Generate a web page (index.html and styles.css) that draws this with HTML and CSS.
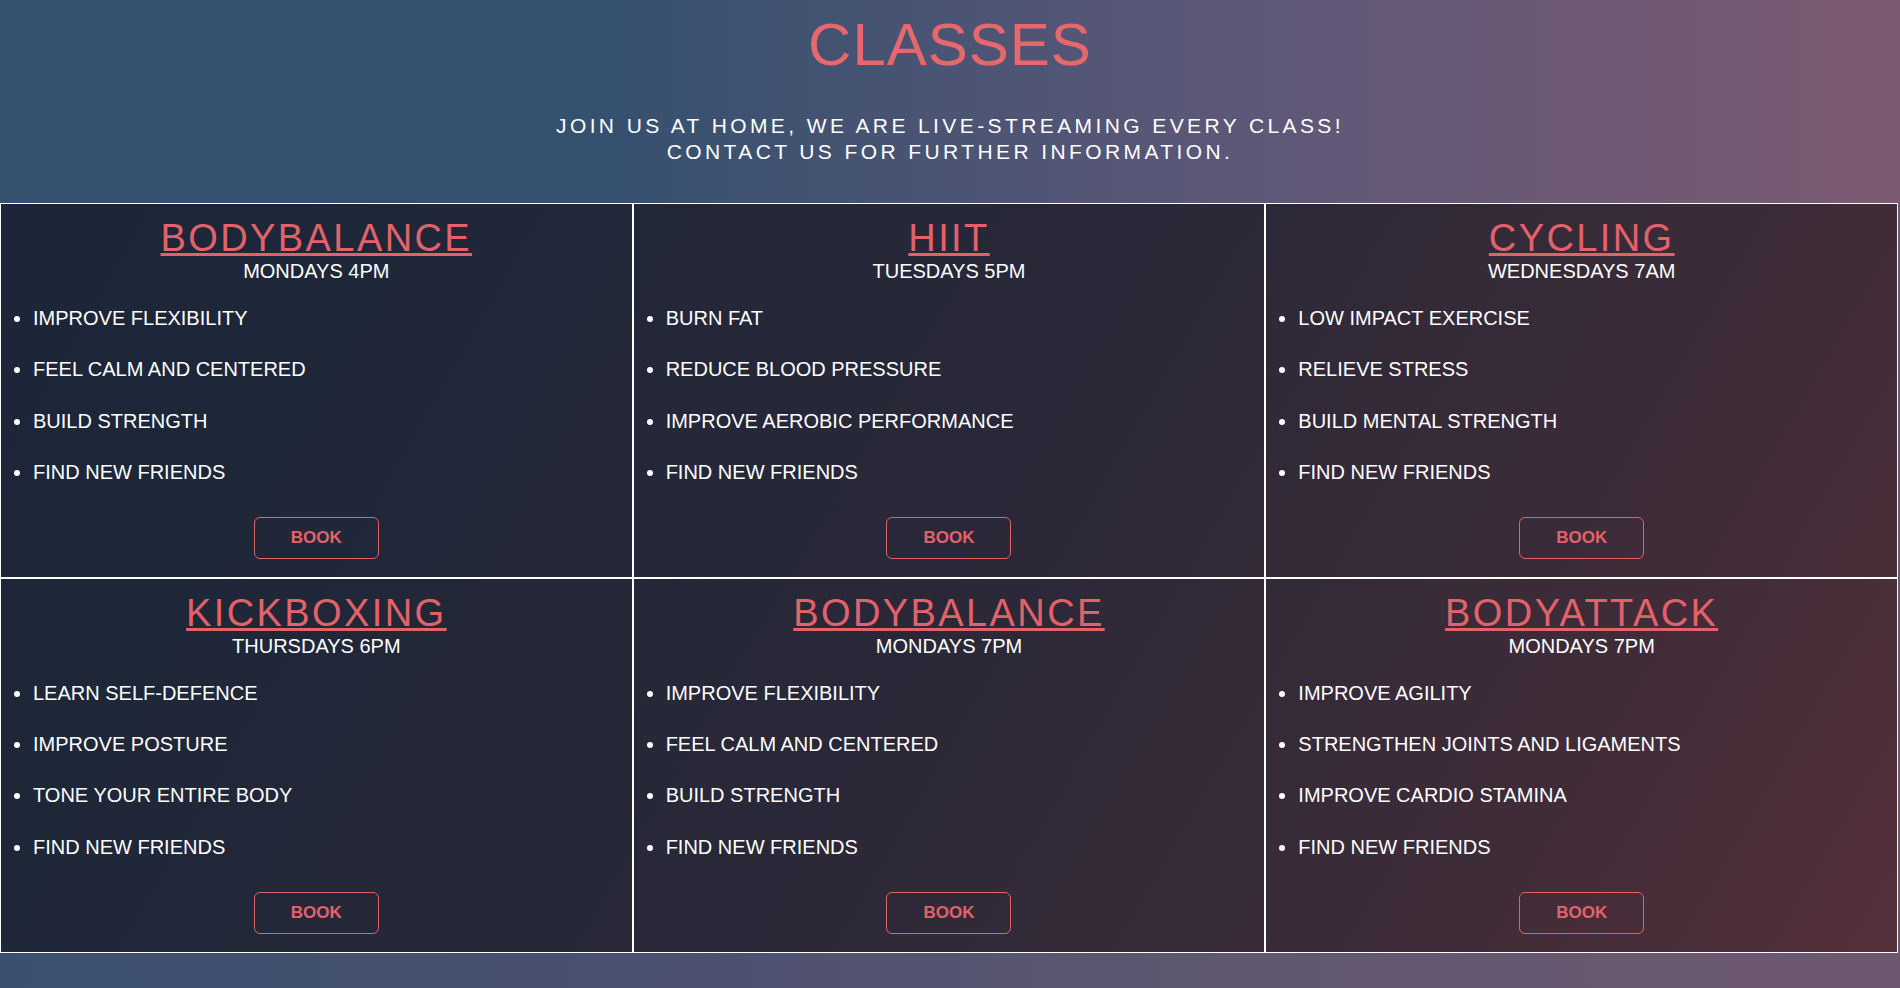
FILE: index.html
```html
<!DOCTYPE html>
<html lang="en">
<head>
<meta charset="utf-8">
<title>Classes</title>
<link rel="stylesheet" href="styles.css">
</head>
<body>
<header class="hero">
  <h1 class="hero__title">CLASSES</h1>
  <p class="hero__text">JOIN US AT HOME, WE ARE LIVE-STREAMING EVERY CLASS!<br>CONTACT US FOR FURTHER INFORMATION.</p>
</header>
<main class="classes">
  <section class="card">
    <h2 class="card__name"><a href="#">BODYBALANCE</a></h2>
    <p class="card__time">MONDAYS 4PM</p>
    <ul class="card__list">
      <li>IMPROVE FLEXIBILITY</li>
      <li>FEEL CALM AND CENTERED</li>
      <li>BUILD STRENGTH</li>
      <li>FIND NEW FRIENDS</li>
    </ul>
    <button class="card__book" type="button">BOOK</button>
  </section>
  <section class="card">
    <h2 class="card__name"><a href="#">HIIT</a></h2>
    <p class="card__time">TUESDAYS 5PM</p>
    <ul class="card__list">
      <li>BURN FAT</li>
      <li>REDUCE BLOOD PRESSURE</li>
      <li>IMPROVE AEROBIC PERFORMANCE</li>
      <li>FIND NEW FRIENDS</li>
    </ul>
    <button class="card__book" type="button">BOOK</button>
  </section>
  <section class="card">
    <h2 class="card__name"><a href="#">CYCLING</a></h2>
    <p class="card__time">WEDNESDAYS 7AM</p>
    <ul class="card__list">
      <li>LOW IMPACT EXERCISE</li>
      <li>RELIEVE STRESS</li>
      <li>BUILD MENTAL STRENGTH</li>
      <li>FIND NEW FRIENDS</li>
    </ul>
    <button class="card__book" type="button">BOOK</button>
  </section>
  <section class="card">
    <h2 class="card__name"><a href="#">KICKBOXING</a></h2>
    <p class="card__time">THURSDAYS 6PM</p>
    <ul class="card__list">
      <li>LEARN SELF-DEFENCE</li>
      <li>IMPROVE POSTURE</li>
      <li>TONE YOUR ENTIRE BODY</li>
      <li>FIND NEW FRIENDS</li>
    </ul>
    <button class="card__book" type="button">BOOK</button>
  </section>
  <section class="card">
    <h2 class="card__name"><a href="#">BODYBALANCE</a></h2>
    <p class="card__time">MONDAYS 7PM</p>
    <ul class="card__list">
      <li>IMPROVE FLEXIBILITY</li>
      <li>FEEL CALM AND CENTERED</li>
      <li>BUILD STRENGTH</li>
      <li>FIND NEW FRIENDS</li>
    </ul>
    <button class="card__book" type="button">BOOK</button>
  </section>
  <section class="card">
    <h2 class="card__name"><a href="#">BODYATTACK</a></h2>
    <p class="card__time">MONDAYS 7PM</p>
    <ul class="card__list">
      <li>IMPROVE AGILITY</li>
      <li>STRENGTHEN JOINTS AND LIGAMENTS</li>
      <li>IMPROVE CARDIO STAMINA</li>
      <li>FIND NEW FRIENDS</li>
    </ul>
    <button class="card__book" type="button">BOOK</button>
  </section>
</main>
</body>
</html>
```
FILE: styles.css
```css
* {
  box-sizing: border-box;
}

html {
  min-height: 100%;
  background: linear-gradient(90deg, #3b5070 0%, #4a5070 34%, #605870 66%, #6e5870 100%);
}

body {
  margin: 0;
  font-family: "Liberation Sans", Arial, sans-serif;
  color: #ffffff;
}

.hero {
  padding: 10px 0 38px;
  text-align: center;
  background: linear-gradient(90deg, #36506f 0%, #36506f 32%, #5f5878 67%, #7c5a71 100%);
}

.hero__title {
  margin: 0;
  font-size: 60px;
  line-height: 69px;
  font-weight: normal;
  letter-spacing: 1px;
  color: #e6686c;
}

.hero__text {
  margin: 34px 0 0;
  font-size: 21px;
  line-height: 26px;
  letter-spacing: 3.4px;
}

.classes {
  display: grid;
  grid-template-columns: repeat(3, 1fr);
  margin-right: 2px;
  background: linear-gradient(120deg, #1c2638 0%, #1d2738 15%, #2a2838 50%, #3f2c38 81%, #55303a 100%);
}

.card {
  display: flex;
  flex-direction: column;
  align-items: center;
  padding: 12px 0 18px;
  border: 1px solid #ffffff;
}

.card__name {
  margin: 0;
  font-size: 38px;
  line-height: 44px;
  font-weight: normal;
  letter-spacing: 2.4px;
  text-align: center;
}

.card__name a {
  color: #e3626a;
  text-decoration: underline;
}

.card__time {
  margin: 0;
  font-size: 20px;
  line-height: 23px;
}

.card__list {
  align-self: stretch;
  margin: 24px 0 0;
  padding-left: 32px;
  font-size: 20px;
  line-height: 23px;
}

.card__list li + li {
  margin-top: 28.3px;
}

.card__book {
  margin-top: 33px;
  width: 125px;
  height: 42px;
  padding: 0;
  border: 1px solid #e3626a;
  border-radius: 6px;
  background: transparent;
  color: #e3626a;
  font-family: "Liberation Sans", Arial, sans-serif;
  font-size: 17px;
  font-weight: bold;
}
```
